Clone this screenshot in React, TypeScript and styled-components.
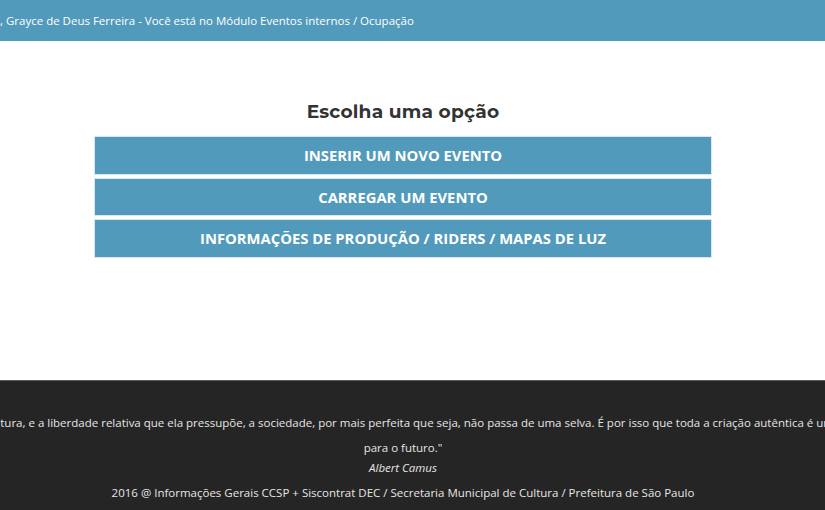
import * as React from "react";
import styled, { createGlobalStyle } from "styled-components";

const GlobalStyle = createGlobalStyle`
  html, body {
    margin: 0;
    padding: 0;
    background: #ffffff;
    font-family: "Open Sans", "Liberation Sans", sans-serif;
    overflow: hidden;
  }
`;

const Page = styled.div`
  display: flex;
  flex-direction: column;
  height: 510px;
  width: 825px;
`;

const TopBar = styled.header`
  background-color: #519abb;
  height: 41px;
  display: flex;
  align-items: center;
  color: #ffffff;
  font-size: 11.5px;
  white-space: nowrap;
  padding-bottom: 1px;
  box-sizing: border-box;
`;

const Main = styled.main`
  flex: 1;
  display: flex;
  flex-direction: column;
  align-items: center;
  padding: 59px 19px 0 0;
`;

const Title = styled.h2`
  margin: 0 0 12px;
  font-family: "Montserrat", "Open Sans", sans-serif;
  font-weight: 700;
  font-size: 18.6px;
  line-height: 24px;
  color: #333333;
  letter-spacing: 0.2px;
`;

const Options = styled.div`
  width: 618px;
  display: flex;
  flex-direction: column;
  gap: 3px;
`;

const OptionButton = styled.button`
  display: block;
  width: 100%;
  height: 38.5px;
  background-color: #519abb;
  border: 1px solid #d6e8f0;
  color: #ffffff;
  font-family: "Open Sans", "Liberation Sans", sans-serif;
  font-weight: 700;
  font-size: 14.8px;
  text-transform: uppercase;
  cursor: pointer;
  padding: 0;
`;

const Footer = styled.footer`
  height: 130px;
  background-color: #252525;
  border-top: 1px solid #5a5a5a;
  color: #e6e6e6;
  font-size: 11.5px;
  display: flex;
  flex-direction: column;
  align-items: center;
  padding: 29px 19px 0 0;
  box-sizing: border-box;
  overflow: hidden;
`;

const Quote = styled.p`
  margin: 0;
  text-align: center;
  line-height: 25px;
  white-space: nowrap;
`;

const Author = styled.span`
  display: block;
  font-style: italic;
  line-height: 15px;
`;

const Copyright = styled.p`
  margin: 9px 0 0;
  text-align: center;
  line-height: 18px;
`;

export default function App() {
  const options = [
    "Inserir um novo evento",
    "Carregar um evento",
    "Informações de produção / riders / mapas de luz",
  ];

  return (
    <>
      <GlobalStyle />
      <Page>
        <TopBar>, Grayce de Deus Ferreira - Você está no Módulo Eventos internos / Ocupação</TopBar>
        <Main>
          <Title>Escolha uma opção</Title>
          <Options>
            {options.map((o) => (
              <OptionButton key={o}>{o}</OptionButton>
            ))}
          </Options>
        </Main>
        <Footer>
          <Quote>
            "Sem a cultura, e a liberdade relativa que ela pressupõe, a sociedade, por mais perfeita que seja, não passa de uma selva. É por isso que toda a criação autêntica é um dom
            <br />
            para o futuro."
            <Author>Albert Camus</Author>
          </Quote>
          <Copyright>
            2016 @ Informações Gerais CCSP + Siscontrat DEC / Secretaria Municipal de Cultura / Prefeitura de São Paulo
          </Copyright>
        </Footer>
      </Page>
    </>
  );
}
